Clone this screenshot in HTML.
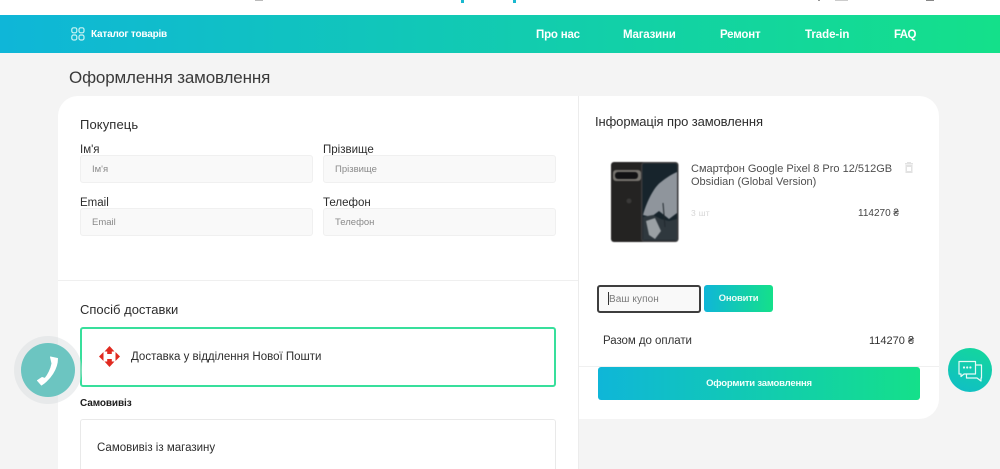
<!DOCTYPE html>
<html lang="uk">
<head>
<meta charset="utf-8">
<title>Оформлення замовлення</title>
<style>
*{box-sizing:border-box;margin:0;padding:0}
html,body{width:1000px;height:469px;overflow:hidden;background:#f4f4f4;font-family:"Liberation Sans",sans-serif;color:#2b2b2b}
#page{position:relative;width:1000px;height:469px;overflow:hidden;background:#f4f4f4}
.a{position:absolute;white-space:nowrap}
#top{left:0;top:0;width:1000px;height:15px;background:#fff}
#nav{left:0;top:15px;width:1000px;height:38px;background:linear-gradient(90deg,#0fb6d8,#14e08a)}
.nav{top:28px;font-size:11.5px;line-height:14px;font-weight:700;color:#fff;letter-spacing:-.2px}
#left{left:58px;top:96px;width:521px;height:373px;background:#fff;border-top-left-radius:20px;border-right:1px solid #ececec}
#right{left:579px;top:96px;width:360px;height:323px;background:#fff;border-radius:0 20px 20px 0}
.h{font-size:13px;line-height:16px;color:#2d2d2d;letter-spacing:0}
.lab{font-size:11.5px;line-height:14px;color:#2d2d2d;letter-spacing:0}
.inp{width:233px;height:28px;background:#f9f9f9;border:1px solid #f0f0f0;border-radius:3px;font-size:9.5px;line-height:27px;color:#8a8a8a;padding-left:11px;letter-spacing:0}
</style>
</head>
<body>
<div id="page">
<div class="a" id="top"></div>
<div class="a" style="left:255px;top:0;width:8px;height:1px;background:#bbb"></div>
<div class="a" style="left:461px;top:0;width:3px;height:3px;background:#1ab8cf"></div>
<div class="a" style="left:513px;top:0;width:3px;height:3px;background:#1ab8cf"></div>
<div class="a" style="left:818px;top:0;width:2px;height:1px;background:#999"></div>
<div class="a" style="left:835px;top:0;width:13px;height:1px;background:#ccc"></div>
<div class="a" style="left:926px;top:0;width:8px;height:1px;background:#888"></div>
<div class="a" id="nav"></div>

<svg class="a" style="left:71px;top:27px" width="14" height="14" viewBox="0 0 14 14" fill="none" stroke="#c9f3f2" stroke-width="1.2"><rect x=".8" y=".8" width="5" height="5" rx="1.7"/><rect x="8" y=".8" width="5" height="5" rx="1.7"/><rect x=".8" y="8" width="5" height="5" rx="1.7"/><rect x="8" y="8" width="5" height="5" rx="1.7"/></svg>
<div class="a" style="left:91px;top:29px;font-size:10px;line-height:12px;font-weight:700;color:#fff;letter-spacing:-.2px">Каталог товарів</div>
<div class="a nav" style="left:536px">Про нас</div>
<div class="a nav" style="left:623px">Магазини</div>
<div class="a nav" style="left:720px">Ремонт</div>
<div class="a nav" style="left:805px;letter-spacing:-.05px">Trade-in</div>
<div class="a nav" style="left:894px;letter-spacing:-.6px">FAQ</div>

<div class="a" style="left:69px;top:68px;font-size:17px;line-height:20px;color:#3a3a3a;letter-spacing:-.15px">Оформлення замовлення</div>

<div class="a" id="left"></div>
<div class="a" id="right"></div>

<div class="a h" style="left:80px;top:117px;letter-spacing:.1px">Покупець</div>
<div class="a lab" style="left:80px;top:143px">Ім'я</div>
<div class="a lab" style="left:323px;top:143px">Прізвище</div>
<div class="a inp" style="left:80px;top:155px">Ім'я</div>
<div class="a inp" style="left:323px;top:155px">Прізвище</div>
<div class="a lab" style="left:80px;top:196px">Email</div>
<div class="a lab" style="left:323px;top:196px">Телефон</div>
<div class="a inp" style="left:80px;top:208px">Email</div>
<div class="a inp" style="left:323px;top:208px">Телефон</div>

<div class="a" style="left:58px;top:280px;width:520px;height:1px;background:#efefef"></div>
<div class="a h" style="left:80px;top:302px">Спосіб доставки</div>
<div class="a" style="left:80px;top:327px;width:476px;height:60px;border:2px solid #38df9c;border-radius:3px"></div>
<svg class="a" style="left:98px;top:345px" width="23" height="23" viewBox="0 0 23 23" fill="#e02a20"><path d="M11.5 1 16.5 6.500H13.800V9H9.200V6.500H6.500Z"/><path d="M11.5 22 16.500 16.500H13.800V14H9.200V16.500H6.500Z"/><path d="M1 11.500 5.500 7V16Z"/><path d="M22 11.500 17.500 7V16Z"/></svg>
<div class="a" style="left:131px;top:350px;font-size:11.500px;line-height:15px;color:#2d2d2d">Доставка у відділення Нової Пошти</div>
<div class="a" style="left:80px;top:398px;font-size:10px;line-height:12px;font-weight:700;color:#1b1b1b;letter-spacing:-.1px">Самовивіз</div>
<div class="a" style="left:80px;top:419px;width:476px;height:70px;border:1px solid #e9e9e9;border-radius:3px"></div>
<div class="a" style="left:97px;top:441px;font-size:11.500px;line-height:15px;color:#2d2d2d">Самовивіз із магазину</div>

<div class="a h" style="left:595px;top:114px;letter-spacing:-.1px">Інформація про замовлення</div>

<svg class="a" style="left:611px;top:161px;filter:blur(.4px)" width="68" height="81" viewBox="0 0 68 81">
<rect x="0" y="1" width="38" height="80" rx="3" fill="#242322"/>
<rect x="2" y="9" width="28" height="11" rx="3" fill="#77746f"/>
<rect x="4" y="11" width="23" height="7" rx="3" fill="#121214"/>
<circle cx="18" cy="40" r="2.500" fill="#3a3938"/>
<rect x="30" y="1" width="37.500" height="80" rx="3" fill="#3a3a3c"/>
<rect x="31.500" y="2.500" width="34.500" height="77" rx="2" fill="#17242c"/>
<path d="M32 54C36 40 43 26 50 21C55 17 61 13 66 11V52L58 58L48 50L40 56Z" fill="#8f959c"/>
<path d="M32 56L42 54L50 58L58 60L66 58V79H32Z" fill="#2f383e"/>
<path d="M35 60L44 57L50 70L44 78L38 74Z" fill="#9aa0a4"/>
<path d="M52 42L54 66" stroke="#20282e" stroke-width="1"/>
</svg>

<div class="a" style="left:691px;top:163px;font-size:11px;line-height:13px;color:#4f4f4f">Смартфон Google Pixel 8 Pro 12/512GB<br>Obsidian (Global Version)</div>
<svg class="a" style="left:904px;top:162px" width="10" height="11" viewBox="0 0 10 11" fill="#e2e2e2"><rect x="3" y="0" width="4" height="1.500"/><rect x="1" y="1" width="8" height="1.500"/><path d="M1.500 3H8.500V11H1.500ZM3 5V9H7V5Z" fill-rule="evenodd"/></svg>
<div class="a" style="left:691px;top:208px;font-size:8.500px;line-height:11px;color:#d6d6d6;letter-spacing:.3px">3 шт</div>
<div class="a" style="left:858px;top:207px;font-size:10px;line-height:13px;color:#444">114270 ₴</div>

<div class="a" style="left:597px;top:285px;width:104px;height:28px;background:#f9f9f9;border:2px solid #3e3e3e;border-radius:3px"></div>
<div class="a" style="left:608px;top:292px;width:1px;height:13px;background:#333"></div>
<div class="a" style="left:609px;top:293px;font-size:10px;line-height:13px;color:#7a7a7a;letter-spacing:.1px">Ваш купон</div>
<div class="a" style="left:704px;top:285px;width:69px;height:27px;background:linear-gradient(90deg,#0fb6d8,#14e08a);border-radius:3px;color:#eafcf6;font-size:9.500px;line-height:28px;font-weight:700;text-align:center;letter-spacing:-.2px">Оновити</div>
<div class="a" style="left:603px;top:334px;font-size:11.500px;line-height:15px;color:#333;letter-spacing:-.05px">Разом до оплати</div>
<div class="a" style="left:869px;top:334px;font-size:11px;line-height:15px;color:#333">114270 ₴</div>
<div class="a" style="left:579px;top:366px;width:360px;height:1px;background:#f0f0f0"></div>
<div class="a" style="left:598px;top:367px;width:322px;height:33px;background:linear-gradient(90deg,#0fb6d8,#14e08a);border-radius:3px;color:#f2fffb;font-size:9.500px;line-height:34px;font-weight:700;text-align:center;letter-spacing:-.2px">Оформити замовлення</div>

<div class="a" style="left:14px;top:336px;width:68px;height:68px;border-radius:50%;background:rgba(215,220,222,.45)"></div>
<div class="a" style="left:21px;top:343px;width:54px;height:54px;border-radius:50%;background:#6cc5c1"></div>
<svg class="a" style="left:36px;top:354px" width="24" height="32" viewBox="0 0 24 32"><path d="M14.500 3 21.500 4.500C21.500 15 14 25.500 5.500 31L1.500 26.500 6 23.500 9 24.500C12 21 15 15 16 9.500Z" fill="#fff" stroke="#fff" stroke-width="1" stroke-linejoin="round"/></svg>

<div class="a" style="left:948px;top:348px;width:44px;height:44px;border-radius:50%;background:linear-gradient(20deg,#10bdc8,#14d89a)"></div>
<svg class="a" style="left:957px;top:359px" width="26" height="24" viewBox="0 0 26 24" fill="none" stroke="#e6faf6" stroke-width="1.200" stroke-linejoin="round"><path d="M2 2.500H18.500V15H7L4 17.500V15H2Z"/><path d="M18.500 6H24.500V19H24V22L20 19H9.500V15"/><circle cx="7" cy="8.500" r=".5" fill="#e6faf6"/><circle cx="10.200" cy="8.500" r=".5" fill="#e6faf6"/><circle cx="13.400" cy="8.500" r=".5" fill="#e6faf6"/></svg>
</div>
</body>
</html>
